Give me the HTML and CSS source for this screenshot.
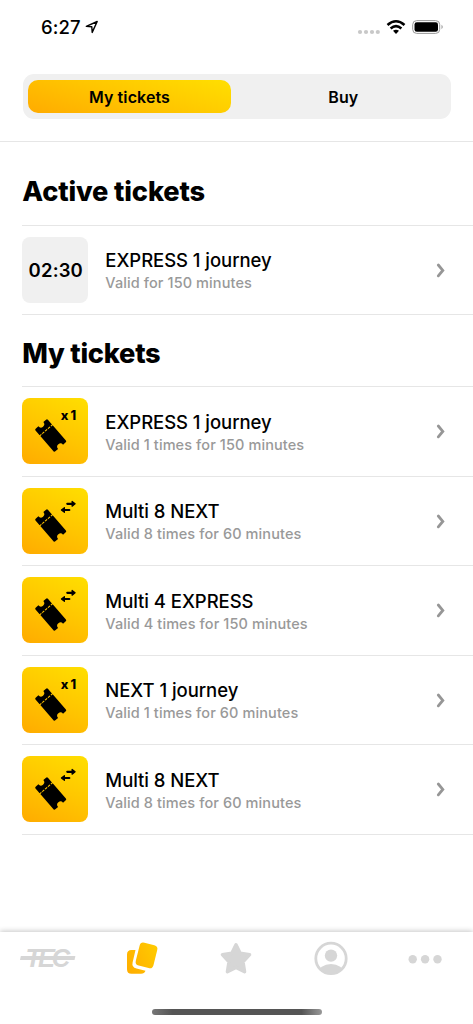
FILE: index.html
```html
<!DOCTYPE html>
<html lang="en">
<head>
<meta charset="utf-8">
<title>My tickets</title>
<link rel="stylesheet" href="styles.css">
</head>
<body>
<svg class="defs" width="0" height="0" aria-hidden="true">
  <defs>
    <linearGradient id="gold" x1="0" y1="1" x2="1" y2="0"><stop offset="0" stop-color="#ffb400"/><stop offset="1" stop-color="#ffcc00"/></linearGradient>
    <linearGradient id="gold-back" x1="0" y1="1" x2="1" y2="0"><stop offset="0" stop-color="#ffad00"/><stop offset="1" stop-color="#ffc100"/></linearGradient>
    <symbol id="ticket" viewBox="0 0 66 66">
      <g transform="translate(28.7 37.5) rotate(49)">
        <path d="M-7.500-8.200H-13.700Q-15-8.200-15-6.900V-3.300A3.100 3.100 0 0 1-15 3.300V6.900Q-15 8.200-13.700 8.200H-7.500Z"/>
        <path d="M-6.400-8.200H13.700Q15-8.200 15-6.900V-3.300A3.100 3.100 0 0 0 15 3.300V6.900Q15 8.200 13.700 8.200H-6.400Z"/>
        <path d="M-6.950-6.300V6.500" fill="none" stroke="#000" stroke-width="1.400" stroke-dasharray="1.200 2.600"/>
      </g>
    </symbol>
    <symbol id="arrows" viewBox="0 0 66 66">
      <path d="M45.300 15.800h6M47.300 22h-6" fill="none" stroke="#000" stroke-width="2.200" stroke-linecap="round"/>
      <path d="M50.100 13.400 53.100 15.800 50.100 18.200ZM42.400 19.600 39.400 22 42.400 24.400Z" stroke="#000" stroke-width="1.200" stroke-linejoin="round"/>
    </symbol>
    <symbol id="chevron" viewBox="0 0 10 16"><path d="M2.300 3 6.800 8.400l-4.500 5.400" fill="none" stroke="#969696" stroke-width="2.800" stroke-linecap="round"/></symbol>
  </defs>
</svg>
<div class="screen">
  <div class="status">
    <span class="time">6:27</span>
    <svg class="location" width="14" height="14" viewBox="0 0 14 14"><path d="M1.300 6.400 12.200 1.500 7.200 12.400 6.800 6.800Z" fill="none" stroke="#000" stroke-width="1.400" stroke-linejoin="round"/></svg>
    <svg class="signals" width="88" height="18" viewBox="0 0 88 18">
      <g fill="#c8c8c8"><circle cx="3" cy="14" r="2.100"/><circle cx="9" cy="14" r="2.100"/><circle cx="15" cy="14" r="2.100"/><circle cx="20.800" cy="14" r="2.100"/></g>
      <g fill="none" stroke="#000" stroke-width="2.600"><path d="M30.500 7Q39-.5 47.500 7"/><path d="M33.600 10.400Q39 5.800 44.400 10.400"/></g>
      <path d="M36 12.800Q39 10.600 42 12.800L39 15.900Z"/>
      <rect x="55.700" y="2.600" width="27" height="12.800" rx="4" fill="none" stroke="#999"/>
      <rect x="57.500" y="4.300" width="23.500" height="9.500" rx="2.300"/>
      <path d="M84.500 6.800Q87 9 84.500 11.200Z" fill="#999"/>
    </svg>
  </div>
  <div class="segments">
    <div class="segment active"><span>My tickets</span></div>
    <div class="segment"><span>Buy</span></div>
  </div>
  <main class="content">
    <h1 class="h-active">Active tickets</h1>
    <div class="list">
      <div class="row"><div class="tile timer">02:30</div><div class="info"><div class="name">EXPRESS 1 journey</div><div class="valid">Valid for 150 minutes</div></div><svg class="chevron"><use href="#chevron"/></svg></div>
    </div>
    <h1 class="h-my">My tickets</h1>
    <div class="list">
      <div class="row"><div class="tile"><svg class="art" viewBox="0 0 66 66"><use href="#ticket"/><text y="22.300" class="count"><tspan x="38.700">x</tspan><tspan x="48.600">1</tspan></text></svg></div><div class="info"><div class="name">EXPRESS 1 journey</div><div class="valid">Valid 1 times for 150 minutes</div></div><svg class="chevron"><use href="#chevron"/></svg></div>
      <div class="row"><div class="tile"><svg class="art" viewBox="0 0 66 66"><use href="#ticket"/><use href="#arrows"/></svg></div><div class="info"><div class="name">Multi 8 NEXT</div><div class="valid">Valid 8 times for 60 minutes</div></div><svg class="chevron"><use href="#chevron"/></svg></div>
      <div class="row"><div class="tile"><svg class="art" viewBox="0 0 66 66"><use href="#ticket"/><use href="#arrows"/></svg></div><div class="info"><div class="name">Multi 4 EXPRESS</div><div class="valid">Valid 4 times for 150 minutes</div></div><svg class="chevron"><use href="#chevron"/></svg></div>
      <div class="row"><div class="tile"><svg class="art" viewBox="0 0 66 66"><use href="#ticket"/><text y="22.300" class="count"><tspan x="38.700">x</tspan><tspan x="48.600">1</tspan></text></svg></div><div class="info"><div class="name">NEXT 1 journey</div><div class="valid">Valid 1 times for 60 minutes</div></div><svg class="chevron"><use href="#chevron"/></svg></div>
      <div class="row"><div class="tile"><svg class="art" viewBox="0 0 66 66"><use href="#ticket"/><use href="#arrows"/></svg></div><div class="info"><div class="name">Multi 8 NEXT</div><div class="valid">Valid 8 times for 60 minutes</div></div><svg class="chevron"><use href="#chevron"/></svg></div>
    </div>
  </main>
  <nav class="tabbar">
    <div class="tabs">
      <svg class="logo" width="56" height="36" viewBox="0 0 56 36"><path d="M.8 16H55.400L54.500 20H0Z" fill="#d6d6d6"/><text class="tec" x="5.500" y="27.300">TEC</text></svg>
      <svg width="34" height="36" viewBox="0 0 34 36"><path d="M10.500 10H6.500Q2 10 2 14.500V29.300Q2 33.800 6.500 33.800H16Q19.500 33.800 20.500 30.800L11.500 28.600Q6.500 27.200 7.600 22.500Z" fill="url(#gold-back)"/><rect x="12.400" y="3.600" width="18.200" height="23.600" rx="4" transform="rotate(14 21.500 15.500)" fill="url(#gold)"/></svg>
      <svg width="34" height="36" viewBox="0 0 34 36"><path d="M17 4.700 21.200 13.200 30.600 14.700 24 21.800 25.600 31.800 17 27.400 8.400 31.800 10 21.800 3.400 14.700 12.800 13.200Z" fill="#d6d6d6" stroke="#d6d6d6" stroke-width="3.400" stroke-linejoin="round"/></svg>
      <svg width="34" height="36" viewBox="0 0 34 36"><defs><clipPath id="face"><circle cx="17" cy="18.400" r="15"/></clipPath></defs><circle cx="17" cy="18.400" r="15.200" fill="none" stroke="#d6d6d6" stroke-width="2.800"/><circle cx="17" cy="15.600" r="6.200" fill="#d6d6d6"/><ellipse cx="17" cy="33.200" rx="13" ry="9.200" fill="#d6d6d6" clip-path="url(#face)"/></svg>
      <svg width="36" height="36" viewBox="0 0 36 36" fill="#d6d6d6"><circle cx="5.700" cy="19.200" r="4.200"/><circle cx="18.100" cy="19.200" r="4.200"/><circle cx="30.500" cy="19.200" r="4.200"/></svg>
    </div>
    <div class="home"></div>
  </nav>
</div>
</body>
</html>
```
FILE: styles.css
```css
* { box-sizing: border-box; }
body { margin: 0; background: #fff; color: #000; font-family: Inter, "Liberation Sans", sans-serif; }
.defs { position: absolute; }
.screen { width: 473px; height: 1024px; display: flex; flex-direction: column; overflow: hidden; }
.status { height: 74px; padding: 18px 28px 0 41px; display: flex; align-items: flex-start; }
.time { font-size: 18.500px; line-height: 19px; font-weight: 500; letter-spacing: 0.150px; }
.location { margin: 2px 0 0 4px; }
.signals { margin-left: auto; }
.segments { height: 44.500px; margin: 0 22.500px; padding: 5.500px; display: grid; grid-template-columns: 203.500px 1fr; background: #f0f0f0; border-radius: 11px; flex: none; }
.segment { display: flex; align-items: center; justify-content: center; font-size: 16px; font-weight: 600; border-radius: 10px; padding: 1px 0 0 10px; }
.active { background: linear-gradient(17deg, #ffab00, #ffc600 50%, #ffdf00); padding-left: 0; margin-right: 0.500px; letter-spacing: 0.100px; }
.content { margin-top: 22px; border-top: 1.500px solid #e6e6e6; flex: 1; padding-left: 22.300px; }
h1 { margin: 0; font-size: 27.200px; line-height: 36px; font-weight: 800; letter-spacing: -0.150px; }
.h-active { height: 83px; padding-top: 32px; }
.h-my { height: 71.500px; padding-top: 21.500px; letter-spacing: -0.250px; }
.list { border-top: 1.500px solid #e6e6e6; }
.row { height: 89.500px; padding-right: 27px; border-bottom: 1.500px solid #e6e6e6; display: flex; align-items: center; }
.list:first-of-type .row { height: 89px; }
.tile { width: 66px; height: 66px; border-radius: 8px; background: linear-gradient(25deg, #ffab00, #ffc600 50%, #ffdf00); flex: none; }
.timer { background: #f0f0f0; display: flex; align-items: center; justify-content: center; font-size: 18.500px; font-weight: 600; letter-spacing: 0.150px; padding-left: 1px; }
.art { display: block; width: 66px; height: 66px; }
.count { font: 800 12.800px Inter, sans-serif; }
.info { margin-left: 17px; flex: 1; white-space: nowrap; padding-top: 1.500px; }
.name { font-size: 18.500px; line-height: 23px; font-weight: 500; letter-spacing: -0.050px; padding-top: 1px; }
.valid { font-size: 14.500px; line-height: 21px; font-weight: 500; color: #999; letter-spacing: 0.100px; }
.chevron { width: 10px; height: 16px; }
.tabbar { height: 92px; flex: none; box-shadow: 0 -1px 5px rgba(0,0,0,.22); }
.tabs { height: 77px; padding: 8px 1px 0; display: grid; grid-template-columns: repeat(5, 94.200px); justify-items: center; }
.logo { overflow: visible; }
.tec { font: italic 600 25.500px "Liberation Sans", sans-serif; fill: #d6d6d6; letter-spacing: -3.200px; }
.home { width: 170px; height: 6px; border-radius: 3px; margin: 0 auto; background: linear-gradient(90deg, #777, #555 12%, #555 88%, #999); }
```
